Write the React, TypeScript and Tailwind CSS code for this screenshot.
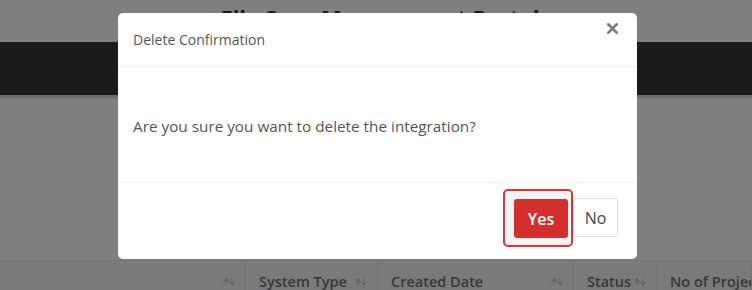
import { X, ArrowUp, ArrowDown } from "lucide-react";

function SortIcon() {
  return (
    <span className="flex items-end text-[#9a9a9a]">
      <ArrowUp size={10} strokeWidth={1.5} />
      <ArrowDown size={10} strokeWidth={1.5} className="-ml-1" />
    </span>
  );
}

const columns = [
  { label: "", width: "w-[246px] shrink-0", justify: "justify-end" },
  { label: "System Type", width: "w-[132px] shrink-0" },
  { label: "Created Date", width: "w-[196px] shrink-0" },
  { label: "Status", width: "w-[83px] shrink-0" },
  { label: "No of Projects", width: "flex-1" },
];

export default function App() {
  return (
    <div
      className="relative w-[752px] h-[290px] overflow-hidden bg-white"
      style={{ fontFamily: "'Open Sans', 'Noto Sans', sans-serif" }}
    >
      {/* page behind the dialog */}
      <div className="flex flex-col">
        <h1 className="text-center text-[22px] font-bold text-[#333] leading-none pt-[6px] pl-[8px] h-[42px]">
          File Sync Management Portal
        </h1>
        <div className="h-[53px] bg-[#363636]" />
        <div className="h-[3px] bg-[#d8d8d8]" />
        <div className="h-[162px]" />
        <div className="h-[42px] shrink-0 flex border-t border-[#eaeaea] bg-[#f4f4f4] text-[14.5px] font-semibold text-[#707070]">
          {columns.map((c, i) => (
            <div
              key={i}
              className={`${c.width} flex items-center ${c.justify ?? "justify-between"} pl-[13px] pr-[8px] border-r border-[#e6e6e6] whitespace-nowrap overflow-hidden`}
            >
              {c.label && <span>{c.label}</span>}
              {c.label !== "No of Projects" && <SortIcon />}
            </div>
          ))}
        </div>
      </div>

      {/* overlay */}
      <div className="absolute inset-0 bg-black/50" />

      {/* dialog */}
      <div className="absolute left-[118px] top-[13px] w-[519px] h-[246px] bg-white rounded-[5px] flex flex-col">
        <div className="h-[54px] flex items-center justify-between pl-[15px] pr-[16px] border-b border-[#f0f0f0]">
          <span className="text-[14px] text-[#555]">Delete Confirmation</span>
          <X size={17} strokeWidth={3.5} className="text-[#7a7a7a] -mt-[22px]" />
        </div>
        <div className="h-[116px] flex items-center px-[15px] border-b border-[#f0f0f0]">
          <p className="text-[15.3px] text-[#555] pt-[3px]">
            Are you sure you want to delete the integration?
          </p>
        </div>
        <div className="flex-1 flex items-start justify-end pr-[19px] pt-[6px]">
          <div className="pl-[9px] pr-[3px] pt-[8px] pb-[7px] rounded-[5px] border-2 border-[#d93636] bg-[#f3f3f3]">
            <button className="block w-[54px] h-[39px] rounded-[3px] bg-[#d32f2f] text-white text-[16px] font-semibold">
              Yes
            </button>
          </div>
          <button className="mt-[9px] w-[45px] h-[39px] rounded-[3px] bg-white border border-[#dedede] text-[#444] text-[16px]">
            No
          </button>
        </div>
      </div>
    </div>
  );
}
